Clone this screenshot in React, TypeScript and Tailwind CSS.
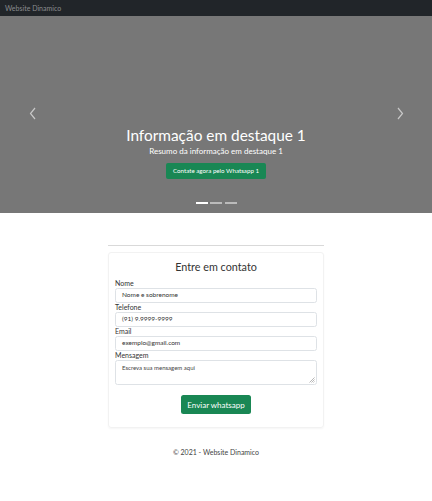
import React from "react";

export default function App() {
  const font = { fontFamily: 'Lato, "Noto Sans", sans-serif' };
  return (
    <div className="w-[432px] min-h-[501px] bg-white" style={font}>
      <nav className="h-[16px] bg-[#212529] flex items-center px-[5px]">
        <span className="text-[7px] text-[#8a8c8f] leading-none">Website Dinamico</span>
      </nav>

      <div className="relative h-[197px] bg-[#777777] flex flex-col items-center justify-end pb-[34px]">
        <svg className="absolute left-[29px] top-[91px]" width="8" height="13" viewBox="0 0 8 13">
          <path d="M6 1 L1.5 6.5 L6 12" fill="none" stroke="#c8c8c8" strokeWidth="1.2" />
        </svg>
        <svg className="absolute left-[396px] top-[91px]" width="8" height="13" viewBox="0 0 8 13">
          <path d="M2 1 L6.5 6.5 L2 12" fill="none" stroke="#c8c8c8" strokeWidth="1.2" />
        </svg>

        <h1 className="text-[15.4px] leading-[19px] text-white">Informação em destaque 1</h1>
        <p className="mt-[0px] text-[8px] leading-[12px] text-white">Resumo da informação em destaque 1</p>
        <button className="mt-[6px] h-[16px] px-[7px] rounded-[2px] bg-[#198754] text-white text-[6.2px] leading-none">
          Contate agora pelo Whatsapp 1
        </button>

        <div className="absolute left-0 right-0 top-[186px] flex justify-center gap-[2.5px]">
          <span className="w-[12px] h-[2px] bg-white" />
          <span className="w-[12px] h-[2px] bg-white/50" />
          <span className="w-[12px] h-[2px] bg-white/50" />
        </div>
      </div>

      <div className="w-[216px] mx-auto pt-[32px]">
        <div className="h-px bg-[#d9d9d9]" />
        <div className="mt-[6px] border border-[#f2f2f2] rounded-[3px] shadow-[0_1px_2px_rgba(0,0,0,0.04)] px-[6px] pt-[7px] pb-[13px]">
          <h2 className="text-center text-[10.8px] leading-[14px] text-[#333]">Entre em contato</h2>
          <div className="mt-[5px] flex flex-col">
            <Field label="Nome" value="Nome e sobrenome" />
            <Field label="Telefone" value="(91) 9.9999-9999" />
            <Field label="Email" value="exemplo@gmail.com" />
            <label className="text-[7px] leading-[9px] text-[#333]">Mensagem</label>
            <div className="relative h-[25px] border border-[#dee2e6] rounded-[2.5px] px-[6px] pt-[3px]">
              <span className="block text-[6px] leading-[8px] text-[#444]">Escreva sua mensagem aqui</span>
              <svg className="absolute right-[1px] bottom-[1px]" width="6" height="6" viewBox="0 0 6 6">
                <path d="M5.5 0.5 L0.5 5.5 M5.5 2.5 L2.5 5.5 M5.5 4.5 L4.5 5.5" stroke="#999" strokeWidth="0.7" />
              </svg>
            </div>
          </div>
          <div className="mt-[10px] flex justify-center">
            <button className="h-[19px] w-[70px] rounded-[2.5px] bg-[#198754] text-white text-[8px] leading-none">
              Enviar whatsapp
            </button>
          </div>
        </div>
        <p className="mt-[20px] text-center text-[7px] leading-[9px] text-[#444]">© 2021 - Website Dinamico</p>
      </div>
    </div>
  );
}

function Field({ label, value }: { label: string; value: string }) {
  return (
    <>
      <label className="text-[7px] leading-[9px] text-[#333]">{label}</label>
      <div className="h-[15px] border border-[#dee2e6] rounded-[2.5px] px-[6px] flex items-center">
        <span className="text-[6.5px] leading-none text-[#333]">{value}</span>
      </div>
    </>
  );
}
